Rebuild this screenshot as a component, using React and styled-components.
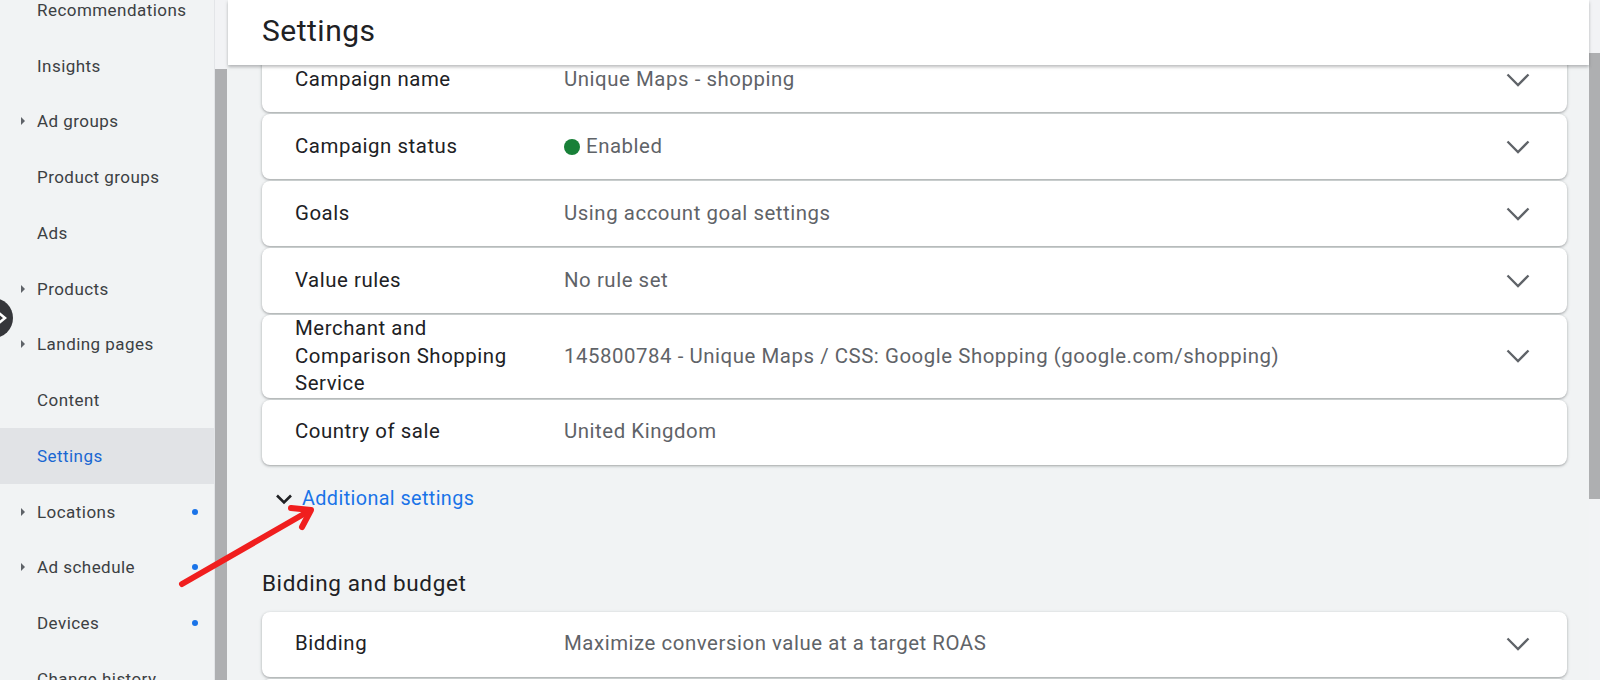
import React from "react";
import styled, { createGlobalStyle } from "styled-components";

const GlobalStyle = createGlobalStyle`
  html, body { margin: 0; padding: 0; }
  body {
    font-family: Roboto, "Noto Sans", Arial, sans-serif;
    background: #f1f3f4;
    overflow: hidden;
  }
  * { box-sizing: border-box; }
`;

const Page = styled.div`
  position: relative;
  width: 1600px;
  height: 680px;
  display: flex;
  overflow: hidden;
  background: #f1f3f4;
`;

const Sidebar = styled.aside`
  width: 227px;
  flex: none;
  display: flex;
  background: #f1f3f4;
`;

const NavList = styled.nav`
  width: 215px;
  flex: none;
  margin-top: -18px;
  border-right: 1px solid #e3e5e8;
`;

const NavItem = styled.div`
  height: 55.75px;
  display: flex;
  align-items: center;
  padding: 0 16px 0 21px;
  background: ${(p) => (p.$active ? "#e1e3e6" : "transparent")};
  color: ${(p) => (p.$active ? "#1967d2" : "#3c4043")};
  font-size: 17px;
  letter-spacing: 0.45px;
`;

const CaretBox = styled.span`
  width: 16px;
  flex: none;
  display: flex;
  align-items: center;
`;

const Caret = styled.span`
  width: 0;
  height: 0;
  border-top: 4.5px solid transparent;
  border-bottom: 4.5px solid transparent;
  border-left: 4.5px solid #5f6368;
`;

const NavLabel = styled.span`
  flex: 1;
  white-space: nowrap;
`;

const NavDot = styled.span`
  width: 6px;
  height: 6px;
  border-radius: 50%;
  background: #1a73e8;
`;

const ScrollTrack = styled.div`
  width: ${(p) => p.$w}px;
  flex: none;
  background: #f2f3f5;
  display: flex;
  flex-direction: column;
`;

const ScrollThumb = styled.div`
  margin-top: ${(p) => p.$top}px;
  height: ${(p) => p.$h}px;
  background: #aeafb1;
`;

const Main = styled.main`
  flex: 1;
  min-width: 0;
  display: flex;
  flex-direction: column;
  padding-left: 1px;
`;

const Header = styled.header`
  position: relative;
  z-index: 1;
  height: 65px;
  flex: none;
  background: #ffffff;
  box-shadow: 0 2px 3px rgba(60, 64, 67, 0.35);
  display: flex;
  align-items: center;
  padding: 0 0 4px 34px;
`;

const Title = styled.h1`
  margin: 0;
  font-weight: 400;
  font-size: 30px;
  letter-spacing: 0.5px;
  color: #202124;
`;

const Body = styled.div`
  position: relative;
  z-index: 0;
  margin-top: -18px;
  padding: 0 22px 0 34px;
`;

const CardList = styled.div`
  display: flex;
  flex-direction: column;
  gap: 2px;
`;

const Card = styled.div`
  min-height: 65px;
  background: #ffffff;
  border-radius: 8px;
  box-shadow: 0 1px 2px rgba(60, 64, 67, 0.3), 0 1px 3px 1px rgba(60, 64, 67, 0.12);
  display: flex;
  align-items: center;
  padding: 0 37px 0 33px;
  font-size: 20.4px;
  line-height: 27.5px;
  letter-spacing: 0.55px;
`;

const Label = styled.div`
  width: 269px;
  flex: none;
  padding-right: 30px;
  color: #202124;
`;

const Value = styled.div`
  flex: 1;
  display: flex;
  align-items: center;
  color: #5f6368;
  white-space: nowrap;
`;

const StatusDot = styled.span`
  width: 16px;
  height: 16px;
  border-radius: 50%;
  background: #188038;
  margin-right: 6px;
`;

const ChevronBox = styled.span`
  width: 24px;
  display: flex;
  justify-content: center;
  align-items: center;
`;

const AdditionalRow = styled.div`
  margin-top: 20px;
  height: 28px;
  display: flex;
  align-items: center;
  padding-left: 13px;
  font-size: 19.8px;
  letter-spacing: 0.4px;
  color: #1a73e8;
`;

const SmallChevron = styled.span`
  width: 27px;
  display: flex;
  align-items: center;
`;

const SectionTitle = styled.h2`
  margin: 55px 0 14px;
  height: 30px;
  display: flex;
  align-items: center;
  font-weight: 400;
  font-size: 22.5px;
  letter-spacing: 0.6px;
  color: #202124;
`;

const CollapseButton = styled.div`
  position: absolute;
  left: -27px;
  top: 298px;
  width: 40px;
  height: 40px;
  border-radius: 50%;
  background: #35363a;
  display: flex;
  align-items: center;
  justify-content: flex-end;
  padding-right: 6px;
`;

const Annotation = styled.svg`
  position: absolute;
  left: 0;
  top: 0;
  pointer-events: none;
`;

const Chevron = () => (
  <svg width="24" height="14" viewBox="0 0 24 14">
    <polyline points="1.5,1.5 12,12 22.5,1.5" fill="none" stroke="#5f6368" strokeWidth="2.3" />
  </svg>
);

const navItems = [
  { label: "Recommendations" },
  { label: "Insights" },
  { label: "Ad groups", caret: true },
  { label: "Product groups" },
  { label: "Ads" },
  { label: "Products", caret: true },
  { label: "Landing pages", caret: true },
  { label: "Content" },
  { label: "Settings", active: true },
  { label: "Locations", caret: true, dot: true },
  { label: "Ad schedule", caret: true, dot: true },
  { label: "Devices", dot: true },
  { label: "Change history" },
];

const rows = [
  { label: "Campaign name", value: "Unique Maps - shopping" },
  { label: "Campaign status", value: "Enabled", status: true },
  { label: "Goals", value: "Using account goal settings" },
  { label: "Value rules", value: "No rule set" },
  {
    label: "Merchant and Comparison Shopping Service",
    value: "145800784 - Unique Maps / CSS: Google Shopping (google.com/shopping)",
  },
  { label: "Country of sale", value: "United Kingdom", noChevron: true },
];

export default function App() {
  return (
    <Page>
      <GlobalStyle />
      <Sidebar>
        <NavList>
          {navItems.map((it) => (
            <NavItem key={it.label} $active={it.active}>
              <CaretBox>{it.caret && <Caret />}</CaretBox>
              <NavLabel>{it.label}</NavLabel>
              {it.dot && <NavDot />}
            </NavItem>
          ))}
        </NavList>
        <ScrollTrack $w={12}>
          <ScrollThumb $top={69} $h={640} />
        </ScrollTrack>
      </Sidebar>

      <Main>
        <Header>
          <Title>Settings</Title>
        </Header>
        <Body>
          <CardList>
            {rows.map((r) => (
              <Card key={r.label}>
                <Label>{r.label}</Label>
                <Value>
                  {r.status && <StatusDot />}
                  {r.value}
                </Value>
                <ChevronBox>{!r.noChevron && <Chevron />}</ChevronBox>
              </Card>
            ))}
          </CardList>

          <AdditionalRow>
            <SmallChevron>
              <svg width="18" height="12" viewBox="0 0 18 12">
                <polyline points="2,2.5 9,9.5 16,2.5" fill="none" stroke="#202124" strokeWidth="2.6" />
              </svg>
            </SmallChevron>
            Additional settings
          </AdditionalRow>

          <SectionTitle>Bidding and budget</SectionTitle>
          <CardList>
            <Card>
              <Label>Bidding</Label>
              <Value>Maximize conversion value at a target ROAS</Value>
              <ChevronBox>
                <Chevron />
              </ChevronBox>
            </Card>
            <Card />
          </CardList>
        </Body>
      </Main>

      <ScrollTrack $w={11}>
        <ScrollThumb $top={53} $h={446} />
      </ScrollTrack>

      <CollapseButton>
        <svg width="10" height="14" viewBox="0 0 10 14">
          <polyline points="2,2 8,7 2,12" fill="none" stroke="#ffffff" strokeWidth="2.6" />
        </svg>
      </CollapseButton>

      <Annotation width="1600" height="680" viewBox="0 0 1600 680">
        <g stroke="#f01e1e" strokeWidth="6" strokeLinecap="round" fill="none">
          <line x1="182" y1="584" x2="309" y2="511" />
          <polyline points="291,508 311,510 302,527" strokeLinejoin="round" />
        </g>
      </Annotation>
    </Page>
  );
}
